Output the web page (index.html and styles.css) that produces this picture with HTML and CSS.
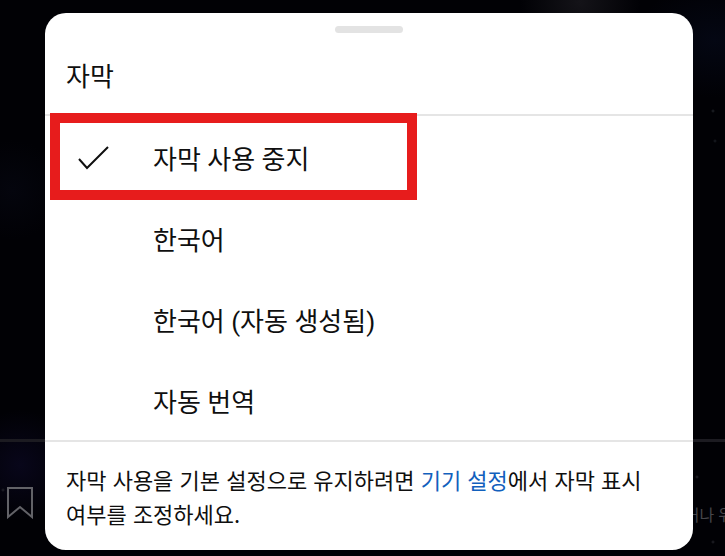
FILE: index.html
```
<!DOCTYPE html>
<html lang="ko">
<head>
	<meta charset="utf-8">
	<meta name="viewport" content="width=device-width, initial-scale=1">
	<title>자막</title>
	<link rel="stylesheet" href="styles.css">
</head>
<body>
	<div class="pagina">
		<div class="fundo">
			<button class="salvar" type="button" aria-label="저장">
				<svg width="26" height="32" viewBox="0 0 26 32"><path d="M1 1H25V30L13 20L1 30Z"/></svg>
			</button>
			<span class="fundo-texto">거나 위</span>
		</div>

		<main class="painel">
			<div class="alca"></div>
			<h1 class="titulo">자막</h1>

			<ul class="opcoes">
				<li class="opcao destaque">
					<button type="button" aria-pressed="true">
						<svg class="marca" width="32" height="24" viewBox="0 0 32 24"><path d="M2 13L10 22L31 1"/></svg>
						<span>자막 사용 중지</span>
					</button>
				</li>
				<li class="opcao"><button type="button"><span>한국어</span></button></li>
				<li class="opcao"><button type="button"><span>한국어 (자동 생성됨)</span></button></li>
				<li class="opcao"><button type="button"><span>자동 번역</span></button></li>
			</ul>

			<p class="rodape">자막 사용을 기본 설정으로 유지하려면 <a href="#">기기 설정</a>에서 자막 표시 여부를 조정하세요.</p>
		</main>
	</div>
</body>
</html>
```
FILE: styles.css
```
*, *::after {
	box-sizing: border-box;
}

body {
	margin: 0;
	background-color: #010105;
	color: #0f0f0f;
	font-family: Roboto, "Noto Sans CJK KR", sans-serif;
	word-break: keep-all;
}

button {
	margin: 0;
	padding: 0;
	border: 0;
	background: none;
	color: inherit;
	font: inherit;
	text-align: left;
	cursor: pointer;
}

.pagina {
	position: relative;
	min-height: 100vh;
	padding: 13px 32px 6px 45px;
	overflow: hidden;
	background-image:
		radial-gradient(circle at 713px 111px, #23262c 0, transparent 2px),
		radial-gradient(circle at 715px 141px, #1c1f26 0, transparent 2px),
		radial-gradient(circle at 697px 477px, #25252c 0, transparent 2px),
		radial-gradient(circle at 713px 542px, #25252c 0, transparent 2px),
		radial-gradient(circle at 3px 490px, #25252c 0, transparent 2px),
		radial-gradient(ellipse at 580px 2px, #141318 0, transparent 60px),
		radial-gradient(ellipse at 715px 40px, #040713 0, transparent 80px),
		radial-gradient(circle at 20px 465px, #08061a 0, transparent 55px),
		radial-gradient(circle at 12px 190px, #04050d 0, transparent 50px);
}

/* Tela atrás do painel */
.fundo {
	position: absolute;
	left: 0;
	right: 0;
	bottom: 0;
	height: 117px;
	border-top: 3px solid #1c1b21;
}

.salvar {
	position: absolute;
	left: 7px;
	top: 45px;
}

.salvar svg {
	display: block;
	fill: none;
	stroke: #626267;
	stroke-width: 2;
}

.fundo-texto {
	position: absolute;
	right: -8px;
	top: 62px;
	color: #46464b;
	font-size: 16px;
	line-height: 24px;
}

.painel {
	position: relative;
	padding-top: 13px;
	border-radius: 21px;
	background-color: #fff;
}

.alca {
	width: 68px;
	height: 7px;
	margin: 0 auto;
	border-radius: 4px;
	background-color: #e3e3e3;
}

.titulo {
	margin: 0;
	padding: 27px 21px 20px;
	border-bottom: 2px solid #e5e5e5;
	font-size: 26px;
	font-weight: 400;
	line-height: 34px;
}

.opcoes {
	margin: 0;
	padding: 0;
	list-style: none;
}

.opcao {
	position: relative;
}

.opcao button {
	display: grid;
	grid-template-columns: 76px 1fr;
	align-items: center;
	width: 100%;
	height: 81px;
	padding: 2px 32px 0;
	font-size: 26px;
}

.opcao span {
	grid-column: 2;
}

.marca {
	fill: none;
	stroke: #0f0f0f;
	stroke-width: 2;
}

/* Moldura vermelha em volta da opção */
.destaque::after {
	content: "";
	position: absolute;
	top: -3px;
	bottom: -3px;
	left: 5px;
	width: 367px;
	border: 10px solid #e71c1c;
	pointer-events: none;
}

.rodape {
	margin: 0;
	padding: 20px 21px;
	border-top: 2px solid #e5e5e5;
	font-family: "Noto Sans CJK KR", sans-serif;
	font-size: 22px;
	line-height: 34px;
}

.rodape a {
	color: #1260bd;
	text-decoration: none;
}
```
